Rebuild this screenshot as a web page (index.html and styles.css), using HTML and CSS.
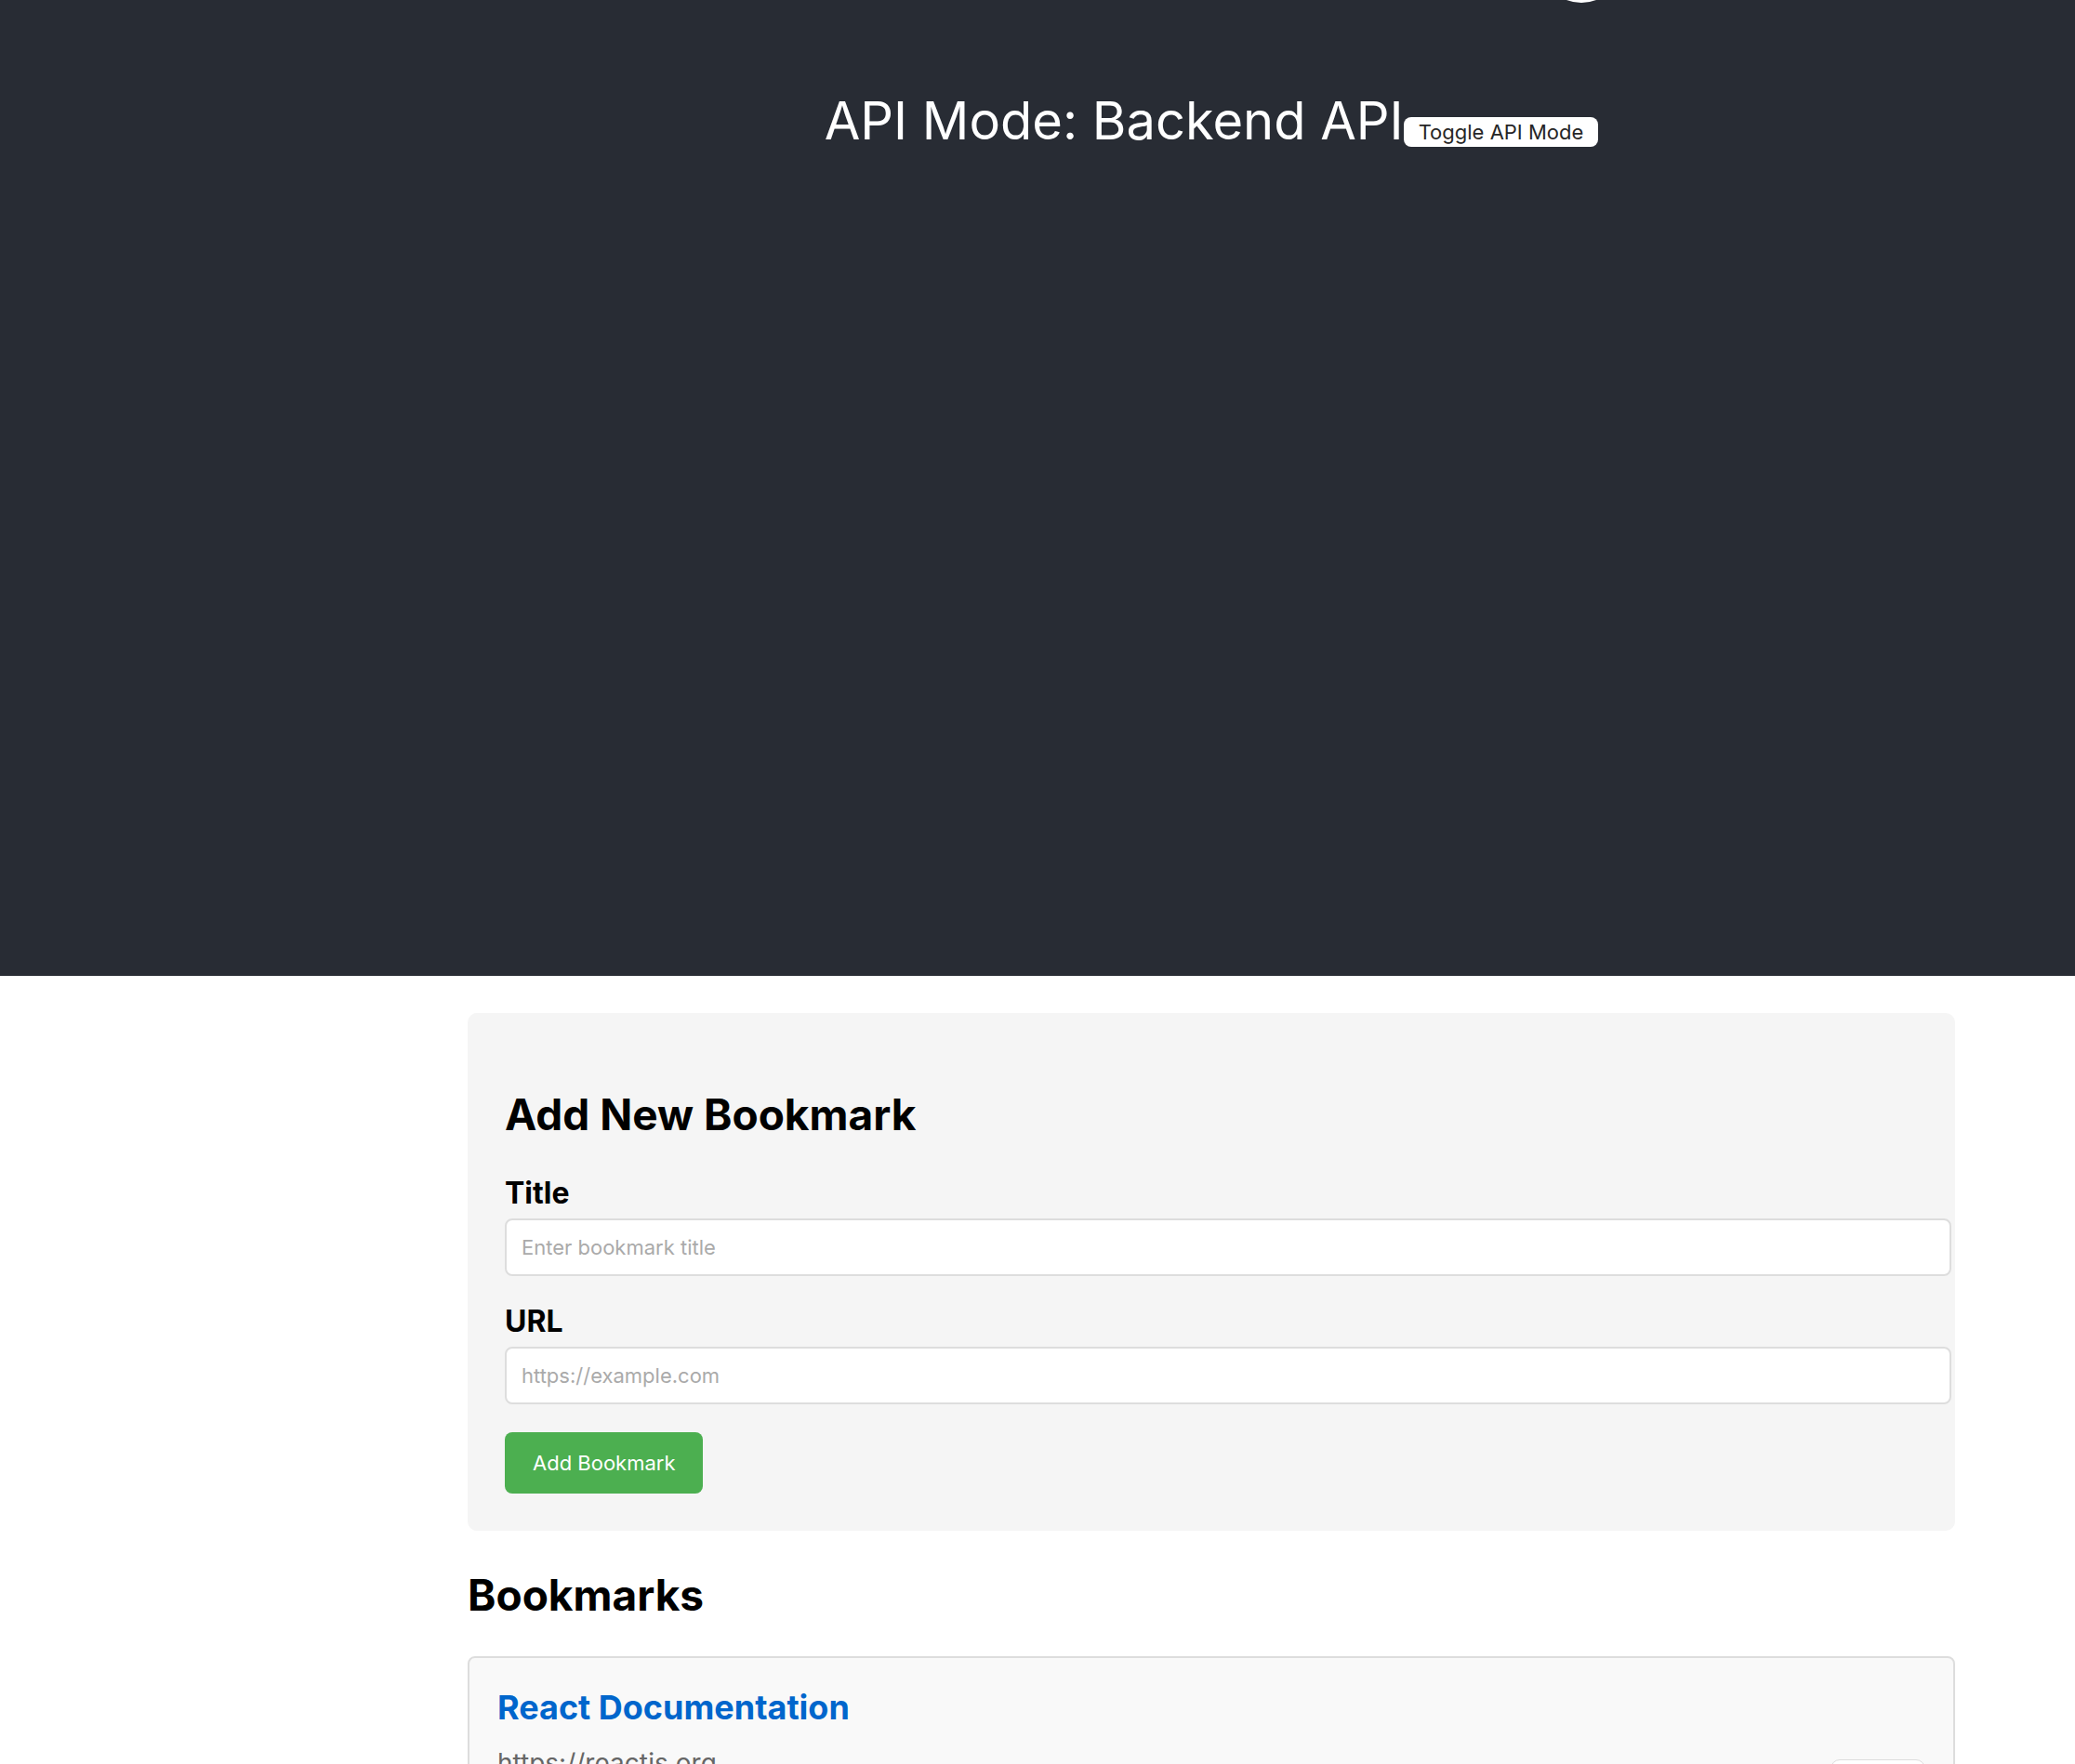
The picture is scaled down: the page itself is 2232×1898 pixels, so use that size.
FILE: index.html
```html
<!DOCTYPE html>
<html lang="en">
<head>
<meta charset="utf-8">
<title>Bookmarks</title>
<link rel="stylesheet" href="styles.css">
</head>
<body>
<div class="app">
  <header class="app-header">
    <svg class="logo" viewBox="0 0 88 4" aria-hidden="true"><circle cx="45" cy="-41" r="44" fill="#fff"/></svg>
    <div class="mode">
      <span class="mode-label">API Mode: Backend API</span>
      <button class="toggle" type="button">Toggle API Mode</button>
    </div>
  </header>
  <main class="content">
    <form class="form">
      <h2 class="heading">Add New Bookmark</h2>
      <div class="field">
        <label class="label" for="title">Title</label>
        <input class="input" id="title" type="text" placeholder="Enter bookmark title">
      </div>
      <div class="field">
        <label class="label" for="url">URL</label>
        <input class="input" id="url" type="url" placeholder="https://example.com">
      </div>
      <button class="submit" type="submit">Add Bookmark</button>
    </form>
    <section class="list">
      <h2 class="heading">Bookmarks</h2>
      <article class="card">
        <div class="card-text">
          <h3 class="card-title"><a class="card-link" href="https://reactjs.org">React Documentation</a></h3>
          <p class="card-url">https://reactjs.org</p>
        </div>
        <button class="delete" type="button" aria-label="Delete"></button>
      </article>
    </section>
  </main>
</div>
</body>
</html>
```
FILE: styles.css
```css
body {
  margin: 0;
  background: #fff;
  color: #000;
  font-family: Inter, "Liberation Sans", sans-serif;
}

.app {
  height: 100vh;
  overflow: hidden;
}

.app-header {
  box-sizing: border-box;
  min-height: 1050px;
  padding: 0 129px 0 503px;
  background: #282c34;
  color: #fff;
}

.logo {
  display: block;
  width: 88px;
  height: 4px;
  margin-left: auto;
  margin-right: 359px;
}

.mode {
  display: flex;
  justify-content: center;
  align-items: baseline;
  padding-top: 90px;
}

.mode-label {
  font-size: 56px;
  line-height: 72px;
}

.toggle {
  height: 32px;
  padding: 0 16px;
  border: 0;
  border-radius: 8px;
  background: #fff;
  color: #262626;
  font-family: inherit;
  font-size: 22px;
  line-height: 32px;
}

.content {
  padding: 40px 129px 40px 503px;
}

.form {
  padding: 40px;
  border-radius: 10px;
  background: #f5f5f5;
}

.heading {
  margin: 0;
  font-size: 46px;
  font-weight: 700;
  line-height: 58px;
}

.form .heading {
  padding: 40px 0 37px;
}

.field {
  margin-bottom: 30px;
}

.label {
  display: block;
  margin-bottom: 8px;
  font-size: 32px;
  font-weight: 700;
  line-height: 38px;
}

.input {
  display: block;
  width: 100%;
  height: 26px;
  padding: 16px;
  border: 2px solid #ddd;
  border-radius: 8px;
  background: #fff;
  font-family: inherit;
  font-size: 22px;
  line-height: 26px;
}

.input::placeholder {
  color: #aaa;
}

.submit {
  display: block;
  height: 66px;
  padding: 0 30px;
  border: 0;
  border-radius: 8px;
  background: #4caf50;
  color: #fff;
  font-family: inherit;
  font-size: 22px;
}

.list {
  padding-top: 40px;
}

.list .heading {
  padding-bottom: 37px;
}

.card {
  display: flex;
  justify-content: space-between;
  align-items: center;
  min-height: 190px;
  padding: 30px;
  border: 2px solid #ddd;
  border-radius: 8px;
  background: #f9f9f9;
}

.card-text {
  align-self: flex-start;
}

.card-title {
  margin: 0 0 20px;
  font-size: 36px;
  font-weight: 700;
  line-height: 46px;
}

.card-link {
  color: #06c;
  text-decoration: none;
}

.card-url {
  margin: 0;
  color: #666;
  font-size: 28px;
  line-height: 34px;
}

.delete {
  width: 102px;
  height: 32px;
  border: 1px solid #ddd;
  border-radius: 10px;
  background: #fff;
}
```
